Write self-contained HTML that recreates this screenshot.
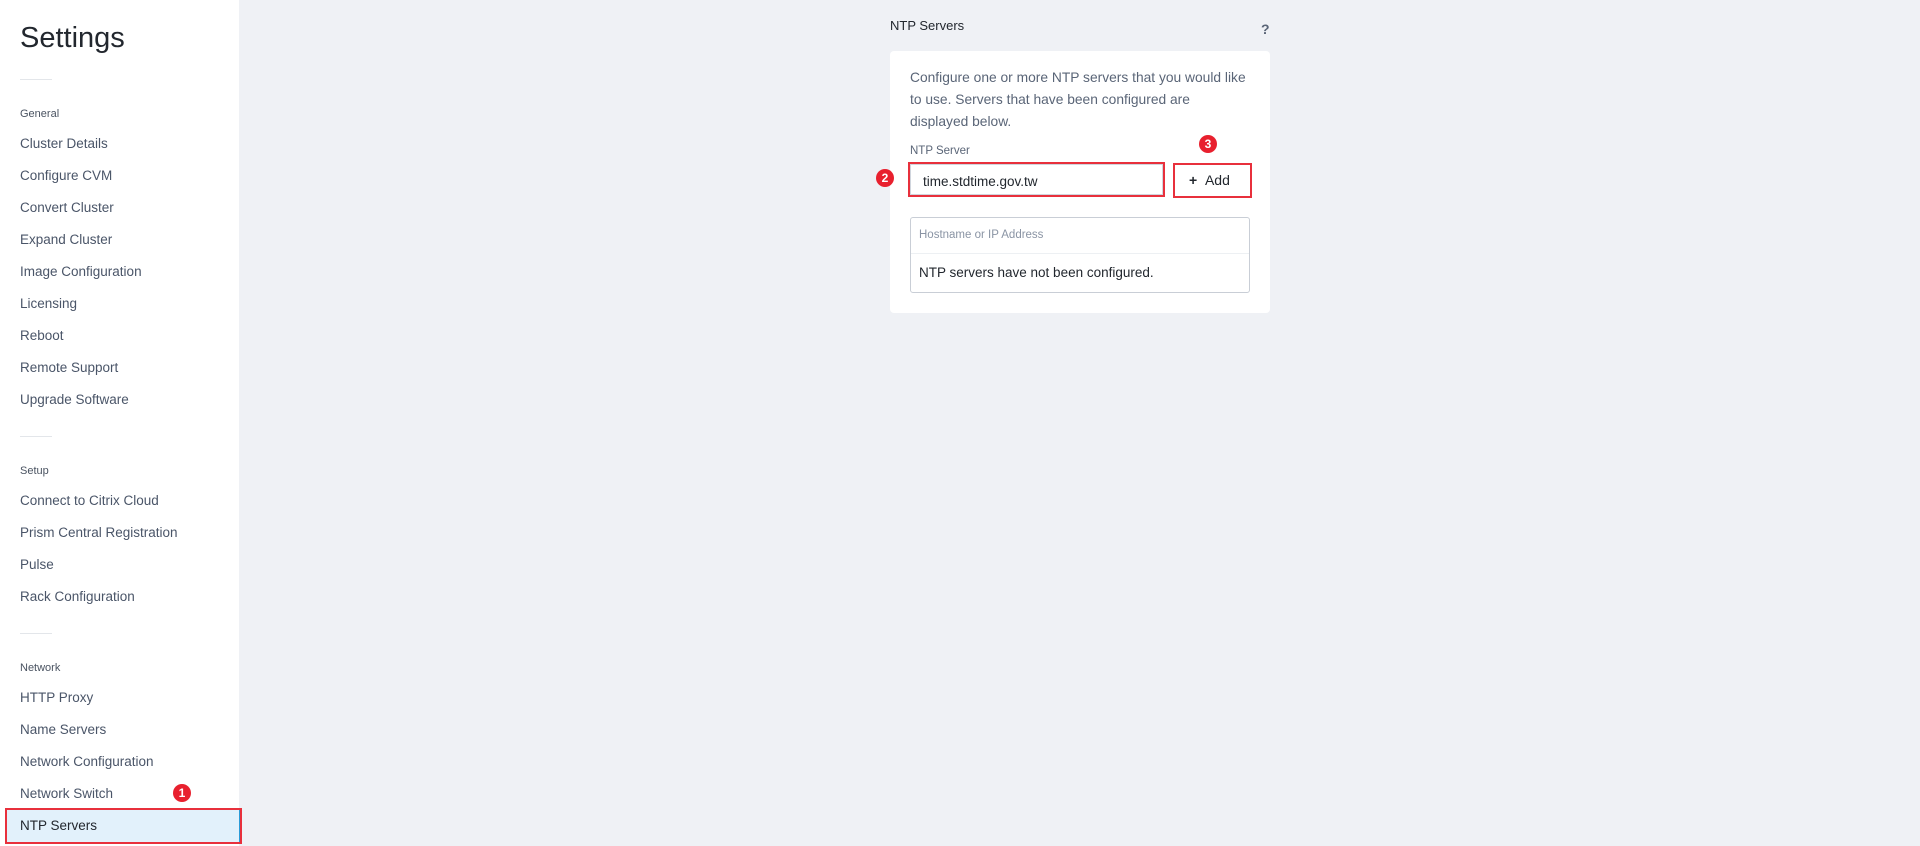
<!DOCTYPE html>
<html><head><style>
*{margin:0;padding:0;box-sizing:border-box}
body{width:1920px;height:846px;background:#eff1f5;font-family:"Liberation Sans",sans-serif;position:relative;overflow:hidden}
.sb{position:absolute;left:0;top:0;width:239px;height:846px;background:#fff}
.a{position:absolute;white-space:nowrap}
.h1{left:20px;top:22px;font-size:29px;color:#22272e;font-weight:300}
.div{position:absolute;left:20px;width:32px;height:1px;background:#e3e6ea}
.sec{left:20px;font-size:11px;color:#4a5361}
.it{left:20px;font-size:13.5px;color:#4a5568}
.badge{position:absolute;width:18px;height:18px;border-radius:50%;background:#e8202e;color:#fff;font-size:12px;font-weight:bold;text-align:center;line-height:18px}
.red{position:absolute;border:2px solid #e8303c}
</style></head><body>
<div class="sb">
<div class="a h1">Settings</div>
<div class="div" style="top:79px"></div>
<div class="a sec" style="top:108px">General</div>
<div class="a it" style="top:136px">Cluster Details</div>
<div class="a it" style="top:168px">Configure CVM</div>
<div class="a it" style="top:200px">Convert Cluster</div>
<div class="a it" style="top:232px">Expand Cluster</div>
<div class="a it" style="top:264px">Image Configuration</div>
<div class="a it" style="top:296px">Licensing</div>
<div class="a it" style="top:328px">Reboot</div>
<div class="a it" style="top:360px">Remote Support</div>
<div class="a it" style="top:392px">Upgrade Software</div>
<div class="div" style="top:436px"></div>
<div class="a sec" style="top:465px">Setup</div>
<div class="a it" style="top:493px">Connect to Citrix Cloud</div>
<div class="a it" style="top:525px">Prism Central Registration</div>
<div class="a it" style="top:557px">Pulse</div>
<div class="a it" style="top:589px">Rack Configuration</div>
<div class="div" style="top:633px"></div>
<div class="a sec" style="top:662px">Network</div>
<div class="a it" style="top:690px">HTTP Proxy</div>
<div class="a it" style="top:722px">Name Servers</div>
<div class="a it" style="top:754px">Network Configuration</div>
<div class="a it" style="top:786px">Network Switch</div>
</div>
<div style="position:absolute;left:5px;top:808px;width:236px;height:35px;background:#e2f1fb;border-right:2px solid #2a9bd8"></div>
<div class="red" style="left:5px;top:808px;width:237px;height:36px"></div>
<div class="a it" style="top:818px;color:#22272e">NTP Servers</div>
<div class="badge" style="left:173px;top:784px">1</div>

<div class="a" style="left:890px;top:18px;font-size:13px;color:#22272e">NTP Servers</div>
<div class="a" style="left:1261px;top:21px;font-size:14px;font-weight:bold;color:#5a6577">?</div>
<div style="position:absolute;left:890px;top:51px;width:380px;height:262px;background:#fff;border-radius:4px"></div>
<div class="a" style="left:910px;top:67px;font-size:13.8px;line-height:22px;color:#5a6577;white-space:normal;width:338px">Configure one or more NTP servers that you would like to use. Servers that have been configured are displayed below.</div>
<div class="a" style="left:910px;top:145px;font-size:11.5px;color:#5a6577">NTP Server</div>
<div style="position:absolute;left:910px;top:164px;width:253px;height:31px;border:1px solid #d0d5dd;background:#fff"></div>
<div class="red" style="left:908px;top:162px;width:257px;height:35px"></div>
<div class="a" style="left:923px;top:174px;font-size:13.5px;color:#22272e">time.stdtime.gov.tw</div>
<div class="badge" style="left:876px;top:169px">2</div>
<div class="red" style="left:1173px;top:163px;width:79px;height:35px;background:#fff"></div>
<div class="a" style="left:1189px;top:172px;font-size:14px;color:#22272e"><b>+</b>&nbsp;&nbsp;Add</div>
<div class="badge" style="left:1199px;top:135px">3</div>
<div style="position:absolute;left:910px;top:217px;width:340px;height:76px;border:1px solid #c9ced6;border-radius:3px"></div>
<div style="position:absolute;left:911px;top:253px;width:338px;height:1px;background:#edf0f3"></div>
<div class="a" style="left:919px;top:229px;font-size:11.5px;color:#8a94a4">Hostname or IP Address</div>
<div class="a" style="left:919px;top:265px;font-size:13.5px;color:#22272e">NTP servers have not been configured.</div>
</body></html>
